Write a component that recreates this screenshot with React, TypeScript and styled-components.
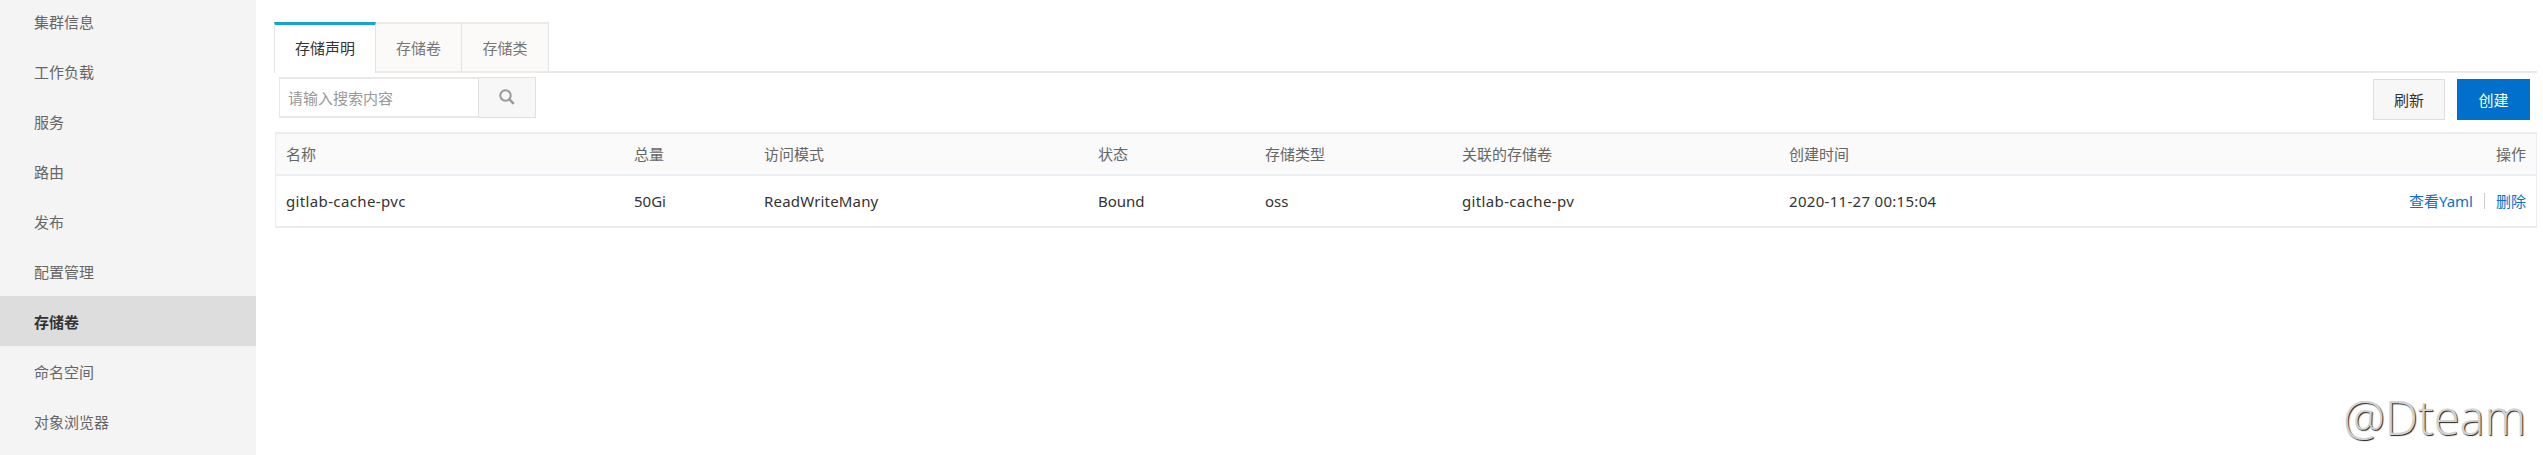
import React from "react";
import styled, { createGlobalStyle } from "styled-components";

const Global = createGlobalStyle`
  * { box-sizing: border-box; }
  body {
    margin: 0;
    background: #fff;
    overflow: hidden;
    font: 15px/20px "Noto Sans", "Noto Sans CJK SC", sans-serif;
    color: #333;
  }
`;

const Page = styled.div`
  display: flex;
  height: 455px;
  overflow: hidden;
  position: relative;
`;

const Sidebar = styled.nav`
  flex: none;
  width: 256px;
  background: #f4f4f4;
  overflow: hidden;
`;

const Menu = styled.div`
  display: flex;
  flex-direction: column;
  margin-top: -4px;
`;

const MenuItem = styled.a<{ $active?: boolean }>`
  flex: none;
  height: 50px;
  padding-left: 34px;
  line-height: 52px;
  color: ${(p) => (p.$active ? "#333" : "#666")};
  font-weight: ${(p) => (p.$active ? 700 : 400)};
  background: ${(p) => (p.$active ? "#ddd" : "transparent")};
`;

const Content = styled.main`
  flex: 1;
  padding: 22px 6px 0 18px;
`;

const Tabs = styled.div`
  display: flex;
  height: 51px;
  border-bottom: 2px solid #ebebeb;
`;

const Tab = styled.div<{ $active?: boolean; $width: number }>`
  width: ${(p) => p.$width}px;
  height: ${(p) => (p.$active ? 51 : 49)}px;
  border-top: ${(p) => (p.$active ? "3px solid #1ba4cb" : "2px solid #ebebeb")};
  border-right: 1px solid #e3e3e3;
  border-left: ${(p) => (p.$active ? "1px solid #e3e3e3" : "none")};
  background: ${(p) => (p.$active ? "#fff" : "#fbfaf8")};
  color: ${(p) => (p.$active ? "#333" : "#777")};
  line-height: ${(p) => (p.$active ? 46 : 48)}px;
  text-align: center;
`;

const Toolbar = styled.div`
  display: flex;
  justify-content: space-between;
  height: 59px;
  padding: 4px 7px 0 5px;
`;

const Group = styled.div<{ $gap?: number; $top?: number }>`
  display: flex;
  gap: ${(p) => p.$gap ?? 0}px;
  padding-top: ${(p) => p.$top ?? 0}px;
`;

const SearchInput = styled.input`
  width: 199px;
  height: 41px;
  padding: 0 0 0 8px;
  border: 2px solid #e8e8e8;
  border-left-width: 1px;
  border-right: 0;
  border-radius: 0;
  outline: 0;
  font: inherit;
  &::placeholder { color: #999; opacity: 1; }
`;

const SearchButton = styled.button`
  display: flex;
  align-items: center;
  justify-content: center;
  width: 58px;
  height: 41px;
  padding: 0 0 1px;
  border: 1px solid #e0e0e0;
  background: #f7f7f7;
`;

const Button = styled.button<{ $primary?: boolean }>`
  width: ${(p) => (p.$primary ? 73 : 72)}px;
  height: 41px;
  padding: 0;
  border: 1px solid ${(p) => (p.$primary ? "#0070cc" : "#dedede")};
  background: ${(p) => (p.$primary ? "#0070cc" : "#f7f7f7")};
  color: ${(p) => (p.$primary ? "#fff" : "#333")};
  font: inherit;
`;

const Table = styled.div`
  margin-left: 1px;
  height: 96px;
  border: 2px solid #ebecf0;
  border-width: 2px 1px;
`;

const Row = styled.div<{ $head?: boolean }>`
  display: grid;
  grid-template-columns: 348px 130px 334px 167px 197px 327px 1fr;
  align-items: center;
  height: ${(p) => (p.$head ? 42 : 50)}px;
  border-bottom: ${(p) => (p.$head ? "2px solid #ebeef2" : "0")};
  background: ${(p) => (p.$head ? "#fafafa" : "#fff")};
  color: ${(p) => (p.$head ? "#666" : "#333")};
`;

const Cell = styled.div<{ $spacing?: number }>`
  padding: 0 0 1px 10px;
  letter-spacing: ${(p) => p.$spacing ?? 0}px;
  white-space: nowrap;
`;

const LastCells = styled.div`
  display: flex;
  justify-content: space-between;
  padding: 0 10px 1px 10px;
  white-space: nowrap;
`;

const Time = styled.span`
  letter-spacing: 0.3px;
`;

const Actions = styled.div`
  display: flex;
  align-items: center;
`;

const Link = styled.a`
  color: #0e6fce;
`;

const Divider = styled.span`
  width: 1px;
  height: 16px;
  margin: 0 11px;
  background: #ccc;
`;

const Watermark = styled.div`
  position: absolute;
  right: 17px;
  bottom: 8px;
  font: 300 47px/60px "Open Sans", "Noto Sans", sans-serif;
  color: #d2d2d2;
  text-shadow: 1px 1px 1px #222;
`;

const menu = ["集群信息", "工作负载", "服务", "路由", "发布", "配置管理", "存储卷", "命名空间", "对象浏览器"];
const headers = ["名称", "总量", "访问模式", "状态", "存储类型", "关联的存储卷"];
const values: { text: string; spacing?: number }[] = [
  { text: "gitlab-cache-pvc", spacing: 0.36 },
  { text: "50Gi" },
  { text: "ReadWriteMany", spacing: 0.18 },
  { text: "Bound" },
  { text: "oss" },
  { text: "gitlab-cache-pv", spacing: 0.36 },
];

export default function App() {
  return (
    <Page>
      <Global />
      <Sidebar>
        <Menu>
          {menu.map((m) => (
            <MenuItem key={m} $active={m === "存储卷"}>{m}</MenuItem>
          ))}
        </Menu>
      </Sidebar>
      <Content>
        <Tabs>
          <Tab $active $width={102}>存储声明</Tab>
          <Tab $width={86}>存储卷</Tab>
          <Tab $width={87}>存储类</Tab>
        </Tabs>
        <Toolbar>
          <Group>
            <SearchInput placeholder="请输入搜索内容" />
            <SearchButton aria-label="搜索">
              <svg width="16" height="16" viewBox="0 0 16 16" fill="none" stroke="#999">
                <circle cx="6.5" cy="6.5" r="5.2" strokeWidth="2" />
                <path d="M10.4 10.4L14.8 14.8" strokeWidth="2.5" />
              </svg>
            </SearchButton>
          </Group>
          <Group $gap={12} $top={2}>
            <Button>刷新</Button>
            <Button $primary>创建</Button>
          </Group>
        </Toolbar>
        <Table>
          <Row $head>
            {headers.map((h) => <Cell key={h}>{h}</Cell>)}
            <LastCells><span>创建时间</span><span>操作</span></LastCells>
          </Row>
          <Row>
            {values.map((v) => <Cell key={v.text} $spacing={v.spacing}>{v.text}</Cell>)}
            <LastCells>
              <Time>2020-11-27 00:15:04</Time>
              <Actions><Link>查看Yaml</Link><Divider /><Link>删除</Link></Actions>
            </LastCells>
          </Row>
        </Table>
      </Content>
      <Watermark>@Dteam</Watermark>
    </Page>
  );
}
